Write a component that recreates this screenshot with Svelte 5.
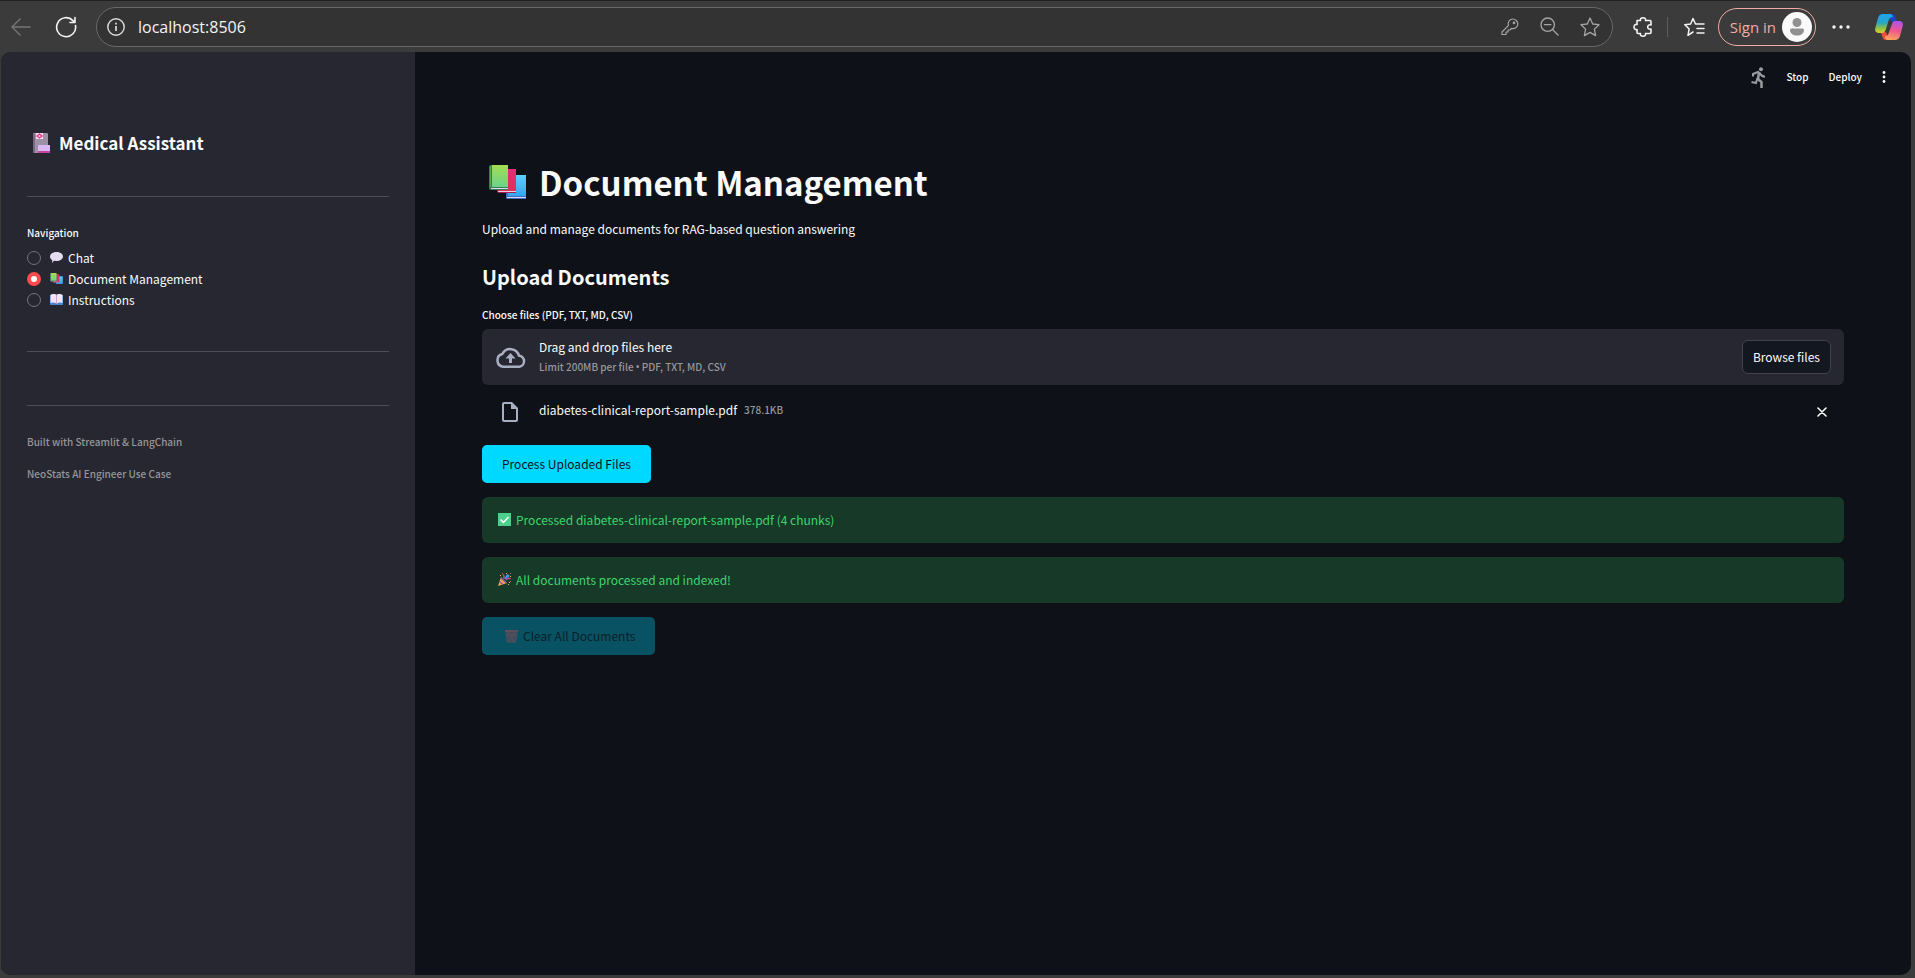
<script>
  let page = $state('docs');
  const links = [
    { id: 'chat', label: 'Chat' },
    { id: 'docs', label: 'Document Management' },
    { id: 'help', label: 'Instructions' }
  ];
</script>

{#snippet books()}
  <svg viewBox="0 0 38 34" aria-hidden="true">
    <defs>
      <linearGradient id="bg" x1="0" y1="0" x2="0" y2="1"><stop offset="0" stop-color="#a5dd50" /><stop offset="1" stop-color="#6bd28b" /></linearGradient>
      <linearGradient id="br" x1="0" y1="0" x2="0" y2="1"><stop offset="0" stop-color="#e02e78" /><stop offset="1" stop-color="#dc3158" /></linearGradient>
      <linearGradient id="bb" x1="0" y1="0" x2="0" y2="1"><stop offset="0" stop-color="#5ad1f5" /><stop offset="1" stop-color="#35a5f3" /></linearGradient>
    </defs>
    <path d="M17 11q0-1 1-1h19v24H18q-1 0-1-1z" fill="#3d6fc0" />
    <path d="M19 10h18v21H19z" fill="url(#bb)" />
    <path d="M18 32h19v1H18z" fill="#e3d5f5" />
    <path d="M8 6q0-2 1-2h18v24H10q-2 0-2-2z" fill="#a51f58" />
    <path d="M10 4h17v22H10z" fill="url(#br)" />
    <path d="M9 26h18v1H9z" fill="#f0cfe4" />
    <path d="M0 2q0-2 2-2h17v25H2q-2 0-2-2z" fill="#397b54" />
    <path d="M3 0h16v22H3z" fill="url(#bg)" />
    <path d="M2 23h17v1H2z" fill="#e3d5f5" />
    <path d="M1 1h1v21H1z" fill="#5fa852" />
  </svg>
{/snippet}

<div class="browser">
  <header class="toolbar">
    <button class="tool back" aria-label="Back">
      <svg width="20" height="20" viewBox="0 0 20 20" fill="none" stroke="#777" stroke-width="1.3"><path d="M19.5 10H1M9.5 1.5 1 10l8.500 8.500" /></svg>
    </button>
    <button class="tool reload" aria-label="Reload">
      <svg width="22" height="22" viewBox="0 0 22 22" fill="none" stroke="#f4f4f4" stroke-width="1.6" stroke-linecap="round" stroke-linejoin="round"><path d="M20.500 9.500A9.500 9.500 0 1 1 18 4.600L20 6.500M20 1.500v5h-5" /></svg>
    </button>
    <div class="address">
      <svg class="info" width="18" height="18" viewBox="0 0 18 18" fill="none" stroke="#ddd" stroke-width="1.4"><circle cx="9" cy="9" r="8.200" /><path d="M9 8v5M9 4.800v1.700" stroke-width="1.700" /></svg>
      <input aria-label="Address" value="localhost:8506" />
      <button class="tool" aria-label="Passwords">
        <svg width="18" height="18" viewBox="0 0 18 18" fill="none" stroke="#a5a5a5" stroke-width="1.200" stroke-linejoin="round"><path d="M1 14 7.300 7.700C6.500 4 8.500 1 11.800 1a5 5 0 0 1 5 5c0 3.300-3 5.300-6.500 4.500L9 12H7v2H5v2.500H1z" /><circle cx="13" cy="4.800" r=".8" /></svg>
      </button>
      <button class="tool" aria-label="Zoom">
        <svg width="19" height="19" viewBox="0 0 19 19" fill="none" stroke="#a5a5a5" stroke-width="1.300" stroke-linecap="round"><circle cx="7.700" cy="7.700" r="6.700" /><path d="M4.500 7.700h6.400M12.500 12.500l5.500 5.500" /></svg>
      </button>
      <button class="tool" aria-label="Add to favourites">
        <svg width="20" height="20" viewBox="0 0 20 20" fill="none" stroke="#a5a5a5" stroke-width="1.300" stroke-linejoin="round"><path d="m10 1 2.700 6 6.300.7-4.600 4.400 1.200 6.500L10 15.400l-5.600 3.200 1.200-6.500L1 7.700 7.300 7z" /></svg>
      </button>
    </div>
    <button class="tool puzzle" aria-label="Extensions">
      <svg width="20" height="20" viewBox="0 0 20 20" fill="none" stroke="#f4f4f4" stroke-width="1.600" stroke-linejoin="round"><path d="M4 3.500h3.500C7 1.500 8.500.8 10 .8s3 .7 2.500 2.700H17q1 0 1 1V8c-1.800-.6-3.300.3-3.300 2s1.500 2.600 3.300 2v3.500q0 1-1 1h-4.500c.5 2-1 2.700-2.500 2.700s-3-.7-2.500-2.700H5q-1 0-1-1V12.500C2 13 1 11.500 1 10s1-3 3-2.500z" /></svg>
    </button>
    <span class="divider"></span>
    <button class="tool collections" aria-label="Favourites">
      <svg width="21" height="20" viewBox="0 0 21 20" fill="none" stroke="#f4f4f4" stroke-width="1.500" stroke-linejoin="round" stroke-linecap="round"><path d="M11.500 7 9 1.500 6.600 7l-5.800.7 4.300 4.200L4 18.300 9 15M9 1.500 11.500 7h8.500M13 11.500h7M13 16h7" /></svg>
    </button>
    <button class="signin">
      <span>Sign in</span>
      <svg width="30" height="30" viewBox="0 0 30 30" aria-hidden="true"><circle cx="15" cy="15" r="15" fill="#fafafa" /><circle cx="15" cy="10.500" r="4.500" fill="#919191" /><path d="M8 18q0-1.500 1.500-1.500h11Q22 16.500 22 18c0 3.500-3 5.500-7 5.500S8 21.500 8 18" fill="#919191" /></svg>
    </button>
    <button class="tool more" aria-label="Settings and more">
      <svg width="18" height="4" viewBox="0 0 18 4" fill="#f4f4f4"><circle cx="2" cy="2" r="1.700" /><circle cx="9" cy="2" r="1.700" /><circle cx="16" cy="2" r="1.700" /></svg>
    </button>
    <button class="tool" aria-label="Copilot">
      <svg width="28" height="26" viewBox="0 0 28 26">
        <defs>
          <linearGradient id="c1" x1="0" y1="0" x2="0" y2="1"><stop offset="0" stop-color="#1ca5f2" /><stop offset=".45" stop-color="#27a5c8" /><stop offset=".75" stop-color="#8fc344" /><stop offset="1" stop-color="#e6c92c" /></linearGradient>
          <linearGradient id="c2" x1=".6" y1="0" x2=".4" y2="1"><stop offset="0" stop-color="#b253e8" /><stop offset=".5" stop-color="#f0568f" /><stop offset="1" stop-color="#fca55b" /></linearGradient>
        </defs>
        <path d="M14 0h3c2.500 0 3 1.500 4 4.500.7 2 1.200 3 3 3.500h-6c-2 0-3-3-4-8" fill="#1647c9" />
        <path d="M14 26h-3c-2.500 0-3.500-2-4-4.500-.5-2-1-3-2.500-3.500H10c2 0 2 5 4 8" fill="#ed5039" />
        <path d="M8 0h7c2 0 2.500 1.500 3 3-3 0-4 2-4.700 4.500L11 15c-.7 2.500-2 4-4.500 4H4c-3 0-4.500-2-3.700-5L3 4C3.800 1.500 5.500 0 8 0" fill="url(#c1)" />
        <path d="M20 26h-7c-2 0-3-1.500-3-4 3 0 3.500-2 4.200-4.500L17 10c.7-2.500 2-3 4.500-3H24c3 0 4.500 2 3.700 5L25 22c-.8 2.500-2.500 4-5 4" fill="url(#c2)" />
      </svg>
    </button>
  </header>

  <div class="app">
    <aside>
      <h2>
        <svg width="18" height="20" viewBox="0 0 18 20" aria-hidden="true"><path d="M0 1q0-1 1-1h13q1 0 1 1v19H0z" fill="#9d91a5" /><path d="M0 1h2v19H0z" fill="#786886" /><path d="M3 0h7v6H3z" fill="#f8dcec" /><path d="M6.500 1 9 3 6.500 5 4 3z" fill="none" stroke="#e23583" stroke-width="1.300" /><path d="M5 12h12v8H5z" fill="#d9b8f5" /><path d="M5 18h12v2H5z" fill="#b44bb0" /><path d="M7 18h2v2H7zM11 18h2v2h-2z" fill="#e23583" /></svg>
        Medical Assistant
      </h2>
      <hr />
      <fieldset>
        <legend>Navigation</legend>
        {#each links as link (link.id)}
          <label>
            <input type="radio" name="page" value={link.id} bind:group={page} />
            <span class="emoji">
              {#if link.id === 'chat'}
                <svg viewBox="0 0 13 11" aria-hidden="true"><path d="M6.500 0C10 0 13 1.800 13 4.500S10 9 6.500 9L4 8.800 2 11l.3-2.700C1 7.500 0 6.200 0 4.500 0 1.800 3 0 6.500 0" fill="#e5dbf0" /></svg>
              {:else if link.id === 'docs'}
                {@render books()}
              {:else}
                <svg viewBox="0 0 13 11" aria-hidden="true"><path d="M0 1h13v10H0z" fill="#4586d0" /><path d="M.5 1q3-2 6-.3Q9.500-1 12.500 1v8q-3-1-6 .5Q3.500 8 .5 9z" fill="#eee6f5" /><path d="M6 1h1v9H6z" fill="#bcabd0" /></svg>
              {/if}
            </span>
            <span>{link.label}</span>
          </label>
        {/each}
      </fieldset>
      <hr class="second" />
      <hr class="third" />
      <p>Built with Streamlit &amp; LangChain</p>
      <p>NeoStats AI Engineer Use Case</p>
    </aside>

    <main>
      <nav>
        <svg width="15" height="21" viewBox="0 0 15 21" fill="none" stroke="#999b9f" stroke-width="2" aria-label="Running" role="img"><circle cx="10" cy="2.200" r="2" fill="#999b9f" stroke="none" /><path d="M2 9.500V7l5-2 2 1.500c1 2 2.500 3 5 3.200" /><path d="M8 5.500 7 12l3.500 3v6" stroke-width="2.500" /><path d="M6.500 11l-1.500 5-4.500-1" /></svg>
        <button>Stop</button>
        <button>Deploy</button>
        <button aria-label="Menu"><svg width="4" height="12" viewBox="0 0 4 12" fill="#fafafa"><circle cx="2" cy="1.500" r="1.400" /><circle cx="2" cy="6" r="1.400" /><circle cx="2" cy="10.500" r="1.400" /></svg></button>
      </nav>

      <section>
        <h1><span class="title-icon">{@render books()}</span>Document Management</h1>
        <p class="lead">Upload and manage documents for RAG-based question answering</p>
        <h2>Upload Documents</h2>
        <span class="label" id="upload-label">Choose files (PDF, TXT, MD, CSV)</span>
        <div class="drop" role="group" aria-labelledby="upload-label">
          <svg width="31" height="21" viewBox="0 0 31 21" fill="none" stroke="#a9afc3" stroke-width="2.500" stroke-linejoin="round" aria-hidden="true"><path d="M24.500 19.700H8A6.500 6.500 0 0 1 7.300 7 9 9 0 0 1 24 8.800a5.500 5.500 0 0 1 .5 10.900z" /><path d="m15.500 6-5 5.500H14V16h3v-4.500h3.500z" fill="#a9afc3" stroke="none" /></svg>
          <div class="hint"><span>Drag and drop files here</span><small>Limit 200MB per file <span class="bullet">•</span> PDF, TXT, MD, CSV</small></div>
          <button class="browse">Browse files</button>
        </div>
        <div class="file">
          <svg width="16" height="20" viewBox="0 0 16 20" aria-hidden="true"><path d="M2 0h8l6 6v12q0 2-2 2H2q-2 0-2-2V2q0-2 2-2m0 2v16h12V7H9V2z" fill="#a9afc3" fill-rule="evenodd" /></svg>
          <div class="name"><span>diabetes-clinical-report-sample.pdf</span><small>378.1KB</small></div>
          <button class="remove" aria-label="Remove file"><svg width="10" height="10" viewBox="0 0 10 10" stroke="#fafafa" stroke-width="1.600" stroke-linecap="round"><path d="m1 1 8 8M9 1 1 9" /></svg></button>
        </div>
        <button class="primary">Process Uploaded Files</button>
        <div class="alert" role="status">
          <svg width="13" height="13" viewBox="0 0 13 13" aria-hidden="true"><path d="M0 0h13v13H0z" fill="#4bd08b" /><path d="m2.500 6.500 3 3L10.500 4" fill="none" stroke="#fff" stroke-width="1.500" /></svg>
          Processed diabetes-clinical-report-sample.pdf (4 chunks)
        </div>
        <div class="alert" role="status">
          <svg width="13" height="13" viewBox="0 0 13 13" aria-hidden="true"><path d="m0 13 3-9 6 6z" fill="#f2a44c" /><path d="m1.500 8.500 3.500 3M3 5l5.500 5" stroke="#7d52b5" stroke-width="1.200" /><path d="M5.500 5.500c1-1 .5-3-.5-4M8 7c1-1.500 3-2 4.500-1" stroke="#d5478e" stroke-width="1.500" fill="none" /><path d="M7 6 10 1.500M9.500 4.500 11 2" stroke="#3c9be0" stroke-width="1.800" /><path d="M2 2h1v1H2zM8 0h1v1H8zM12 3h1v1h-1zM11 9h1v1h-1zM10 11h1v1h-1z" fill="#f0b34f" /><path d="M4 0h1v1H4zM12 0h1v1h-1zM12 8h1v1h-1z" fill="#e54a80" /></svg>
          All documents processed and indexed!
        </div>
        <button class="primary clear" disabled>
          <svg width="13" height="13" viewBox="0 0 13 13" fill="none" stroke="#5d4f5c" aria-hidden="true"><path d="M1 2h11l-1.500 10h-8z" fill="#3b4d5c" stroke="none" /><path d="M0 1h13" stroke-width="2" /><path d="m1 2 1.500 10h8L12 2M3 2l6 9M10 2 4 11M2 5h9" /></svg>
          Clear All Documents
        </button>
      </section>
    </main>
  </div>
</div>

<style>
  :global(body) { margin: 0; background: #3b3b3b; }
  .browser, .browser * { box-sizing: border-box; }
  .browser { display: flex; flex-direction: column; min-height: 100vh; padding: 0 4px 3px 1px; background: #3b3b3b; border-top: 1px solid #202020; }
  svg { display: block; flex: none; }
  button { font: inherit; color: inherit; background: none; border: 0; padding: 0; display: flex; align-items: center; cursor: pointer; }

  .toolbar { display: flex; align-items: center; height: 51px; padding: 0 8px 0 10px; font-family: "Open Sans", "Noto Sans", sans-serif; }
  .reload { margin: 0 19px 0 24px; }
  .address { flex: 1; height: 40px; display: flex; align-items: center; gap: 21px; padding: 0 12px 0 10px; background: #333; border: 1px solid #696969; border-radius: 20px; }
  .address input { flex: 1; min-width: 0; margin-left: -8px; padding: 0; border: 0; outline: 0; background: none; color: #f4f4f4; font: 16px/24px "Open Sans", "Noto Sans", sans-serif; }
  .puzzle { margin-left: 20px; }
  .divider { width: 1px; height: 20px; margin: 0 16px 0 14px; background: #5d5d5d; }
  .signin { height: 38px; margin: 0 16px 0 13px; padding: 0 3px 0 11px; gap: 6px; border: 1px solid #f2aaa6; border-radius: 19px; color: #f2aaa6; font-size: 15px; white-space: nowrap; }
  .more { margin-right: 25px; }

  .app { flex: 1; display: flex; overflow: hidden; border-radius: 10px; background: #0e1117; color: #fafafa; font: 12px/20px "Noto Sans CJK SC", "Noto Sans", sans-serif; }
  aside { width: 414px; flex: none; padding: 78px 26px 26px; background: #262730; }
  aside h2 { display: flex; align-items: center; gap: 8px; margin: 0; padding-left: 6px; font-size: 17px; line-height: 26px; font-weight: 600; }
  hr { height: 1px; margin: 40px 0 26px; border: 0; background: #4c4d56; }
  fieldset { margin: 0; padding: 0; border: 0; }
  legend { padding: 0; margin-bottom: 4px; font-size: 10px; font-weight: 500; }
  label { display: flex; align-items: center; height: 21px; }
  input[type='radio'] { appearance: none; width: 14px; height: 14px; margin: 0 9px 0 0; border: 1px solid #73747c; border-radius: 50%; }
  input[type='radio']:checked { border: 4px solid #ff4b4b; background: #fff; }
  .emoji { width: 13px; margin-right: 5px; }
  .second { margin: 41px 0 53px; }
  .third { margin: 0 0 26px; }
  aside p { margin: 0 0 12px; font-size: 10px; font-weight: 500; color: #95959a; }

  main { flex: 1; min-width: 0; }
  nav { display: flex; justify-content: flex-end; align-items: center; height: 50px; padding-right: 25px; font-size: 10px; font-weight: 500; }
  nav button { margin-left: 20px; }
  section { padding: 52px 67px 40px; }
  h1 { display: flex; align-items: center; gap: 12px; margin: 0; padding-left: 7px; font-size: 33px; line-height: 56px; font-weight: 700; }
  .title-icon { width: 38px; }
  .lead { margin: 9px 0 24px; }
  section h2 { margin: 0; font-size: 20px; line-height: 28px; font-weight: 600; }
  .label { display: block; margin: 14px 0 4px; font-size: 10px; font-weight: 500; }
  .drop { display: flex; align-items: center; gap: 13px; height: 56px; padding: 0 13px; border-radius: 6px; background: #262730; }
  .hint { flex: 1; display: flex; flex-direction: column; }
  small { font-size: 10px; font-weight: 500; color: #96979c; }
  .bullet { font-family: "Noto Sans", sans-serif; }
  .browse { height: 34px; padding: 0 10px; border: 1px solid #41424b; border-radius: 6px; background: #131720; }
  .file { display: flex; align-items: center; gap: 21px; height: 54px; margin-bottom: 6px; padding: 0 17px 0 20px; }
  .name { flex: 1; display: flex; gap: 7px; padding-bottom: 5px; }
  .primary { height: 38px; padding: 0 20px; border-radius: 5px; background: #00d9ff; color: #0e1117; }
  .alert { display: flex; align-items: center; gap: 5px; height: 46px; margin: 14px 0; padding: 0 16px 1px; border-radius: 6px; background: #173928; color: #3dd56d; }
  .alert + .primary { margin-top: 13px; }
  .clear { gap: 5px; padding-left: 23px; background: #095264; color: #0c2029; }
</style>
